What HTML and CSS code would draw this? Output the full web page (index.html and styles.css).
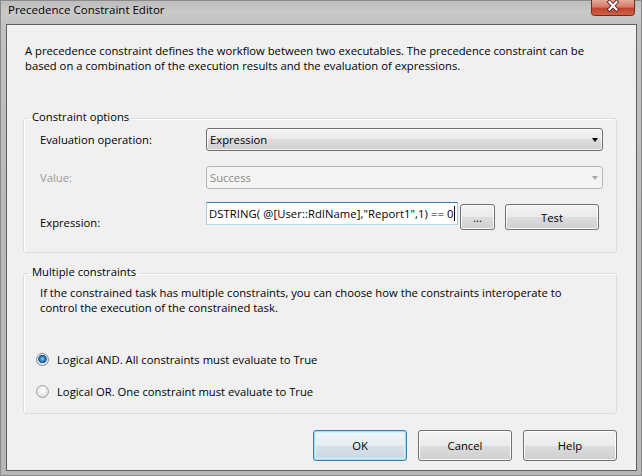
FILE: index.html
```html
<!DOCTYPE html>
<html>
<head>
<meta charset="utf-8">
<link rel="stylesheet" href="styles.css">
</head>
<body>
<div class="window">
  <div class="titlebar">
    <span class="title">Precedence Constraint Editor</span>
    <div class="close">
      <svg width="44" height="16" viewBox="0 0 44 16">
        <defs>
          <linearGradient id="cg" x1="0" y1="0" x2="0" y2="1">
            <stop offset="0" stop-color="#e6a99c"/>
            <stop offset="0.45" stop-color="#d47a68"/>
            <stop offset="0.55" stop-color="#c0432d"/>
            <stop offset="1" stop-color="#d2634c"/>
          </linearGradient>
        </defs>
        <path d="M0.5 0 V12.5 Q0.5 15.5 3.5 15.5 H40.5 Q43.5 15.5 43.5 12.5 V0" fill="url(#cg)" stroke="#6e2a20"/>
        <path d="M18.5 2 L25.5 9.5 M25.5 2 L18.5 9.5" stroke="#5b2118" stroke-width="4" stroke-linecap="square"/>
        <path d="M18.5 2 L25.5 9.5 M25.5 2 L18.5 9.5" stroke="#ffffff" stroke-width="2.2" stroke-linecap="square"/>
      </svg>
    </div>
  </div>
  <div class="client">
    <p class="intro">A precedence constraint defines the workflow between two executables. The precedence constraint can be<br>based on a combination of the execution results and the evaluation of expressions.</p>

    <fieldset class="group group-options">
      <legend>Constraint options</legend>
      <div class="opts-body">
        <div class="row">
          <span class="label">Evaluation operation:</span>
          <div class="combo"><span class="combo-text">Expression</span><span class="arrow"></span></div>
        </div>
        <div class="row row-value">
          <span class="label label-disabled">Value:</span>
          <div class="combo combo-disabled"><span class="combo-text">Success</span><span class="arrow"></span></div>
        </div>
        <div class="row row-expr">
          <span class="label label-expr">Expression:</span>
          <div class="expr-controls">
            <div class="textbox"><span class="tb-text">DSTRING( @[User::RdlName],"Report1",1) == 0</span><span class="caret"></span></div>
            <button class="btn btn-dots">...</button>
            <button class="btn btn-test">Test</button>
          </div>
        </div>
      </div>
    </fieldset>

    <fieldset class="group group-multi">
      <legend>Multiple constraints</legend>
      <div class="multi-body">
        <p class="multi-text">If the constrained task has multiple constraints, you can choose how the constraints interoperate to<br>control the execution of the constrained task.</p>
        <div class="radio-row radio-first"><span class="radio checked"></span><span>Logical AND. All constraints must evaluate to True</span></div>
        <div class="radio-row radio-second"><span class="radio"></span><span>Logical OR. One constraint must evaluate to True</span></div>
      </div>
    </fieldset>

    <div class="footer">
      <button class="btn btn-footer btn-default">OK</button>
      <button class="btn btn-footer">Cancel</button>
      <button class="btn btn-footer">Help</button>
    </div>
  </div>
</div>
</body>
</html>
```

FILE: styles.css
```css
* { box-sizing: border-box; }
html, body { margin: 0; padding: 0; }
body {
  width: 642px;
  height: 476px;
  overflow: hidden;
  font-family: "Open Sans", "Noto Sans", sans-serif;
  font-size: 11.25px;
  color: #000;
  background: #bdbdbd;
}
.window {
  width: 642px;
  height: 476px;
  display: flex;
  flex-direction: column;
  padding: 0 5px 5px 6px;
  background: linear-gradient(180deg, #bcbcbc 0px, #c9c9c9 12px, #c2c2c2 24px, #b9b9b9 200px, #b7b7b7 476px);
  box-shadow: inset 0 0 0 1px #8a8a8a;
}
.titlebar {
  height: 24px;
  flex: none;
  display: flex;
  align-items: flex-start;
}
.title {
  padding: 2px 0 0 2px;
  line-height: 15px;
  font-size: 11.5px;
  color: #000;
}
.close {
  margin-left: auto;
  margin-right: 2px;
  width: 44px;
  height: 16px;
  line-height: 0;
}
.client {
  flex: 1;
  background: #f0f0f0;
  border: 1px solid #5e5e5e;
  display: flex;
  flex-direction: column;
}
.intro {
  margin: 18px 0 0 18px;
  line-height: 15px;
}
.group {
  margin: 0 0 0 16px;
  width: 594px;
  border: 1px solid #d5dfe5;
  border-radius: 3px;
  padding: 0;
  min-inline-size: 0;
  box-shadow: inset 1px 1px 0 #fff;
}
.group legend {
  margin-left: 5px;
  padding: 0 3px 4px;
  line-height: 15px;
}
.group-options { margin-top: 36px; }
.opts-body {
  padding: 0 13px 22px 16px;
  display: flex;
  flex-direction: column;
}
.row {
  display: flex;
  align-items: center;
}
.label {
  width: 166px;
  flex: none;
  line-height: 15px;
}
.label-disabled { color: #9a9a9a; }
.row-value { margin-top: 15px; }
.row-expr {
  margin-top: 13px;
  align-items: flex-start;
}
.label-expr {
  align-self: flex-end;
  margin-bottom: 0;
}
.combo {
  flex: 1;
  height: 23px;
  border: 1px solid #707070;
  border-radius: 3px;
  background: linear-gradient(180deg, #f2f2f2 0%, #ebebeb 50%, #dddddd 50%, #cfcfcf 100%);
  box-shadow: inset 0 0 0 1px rgba(255,255,255,0.7);
  display: flex;
  align-items: center;
  padding: 0 4px 0 3px;
}
.combo-text { flex: 1; line-height: 15px; }
.arrow {
  width: 0;
  height: 0;
  border-left: 3.5px solid transparent;
  border-right: 3.5px solid transparent;
  border-top: 4px solid #000;
}
.combo-disabled {
  border-color: #b7b7b7;
  background: #f4f4f4;
  box-shadow: none;
  color: #8a8a8a;
}
.combo-disabled .arrow { border-top-color: #a9a9a9; }
.expr-controls {
  flex: 1;
  display: flex;
  align-items: flex-start;
}
.textbox {
  width: 252px;
  height: 23px;
  background: #fff;
  border: 1px solid #a4c9e3;
  border-top-color: #3d7bad;
  border-bottom-color: #b7d9ed;
  display: flex;
  align-items: center;
  justify-content: flex-start;
  padding-left: 2px;
  overflow: hidden;
  white-space: nowrap;
}
.tb-text { line-height: 15px; flex: none; letter-spacing: 0.08px; }
.caret {
  width: 1px;
  height: 15px;
  background: #000;
  flex: none;
}
.btn {
  font-family: inherit;
  font-size: 11.25px;
  color: #000;
  border: 1px solid #707070;
  border-radius: 3px;
  background: linear-gradient(180deg, #f2f2f2 0%, #ebebeb 50%, #dddddd 50%, #cfcfcf 100%);
  box-shadow: inset 0 0 0 1px #fbfbfb;
  padding: 0;
  margin: 0;
  line-height: 15px;
}
.btn-dots {
  width: 35px;
  height: 26px;
  margin: 2px 0 0 2px;
}
.btn-test {
  width: 94px;
  height: 26px;
  margin: 2px 0 0 10px;
}
.group-multi { margin-top: 11px; }
.multi-body {
  padding: 2px 0 14px 0;
}
.multi-text {
  margin: 0 0 0 16px;
  line-height: 15px;
}
.radio-row {
  display: flex;
  align-items: center;
  padding-left: 12px;
  line-height: 15px;
  height: 15px;
}
.radio-first { margin-top: 37px; }
.radio-second { margin-top: 17px; }
.radio {
  width: 13px;
  height: 13px;
  border-radius: 50%;
  border: 1px solid #a0a0a0;
  background: radial-gradient(circle at 50% 40%, #ffffff 0%, #f0f0f0 40%, #d4d4d4 100%);
  margin-right: 8px;
  flex: none;
}
.radio.checked {
  border-color: #7f8a93;
  background:
    radial-gradient(circle at 50% 45%, #8fd3f5 0px, #3b8ecc 2px, #1a5a8e 3.5px, #2e6a9a 4px, rgba(0,0,0,0) 4.5px),
    radial-gradient(circle at 50% 40%, #ffffff 0%, #eaeaea 50%, #cfcfcf 100%);
}
.footer {
  margin-top: 16px;
  padding-right: 19px;
  display: flex;
  justify-content: flex-end;
  gap: 11px;
}
.btn-footer {
  width: 94px;
  height: 31px;
}
.btn-default {
  border-color: #3c7fb1;
  box-shadow: inset 0 0 0 1px #a6dcf6, inset 0 0 0 2px #d6f0fb;
  background: linear-gradient(180deg, #f0f6f9 0%, #e6eef2 50%, #d7e2e8 50%, #cbd8e0 100%);
}
```
